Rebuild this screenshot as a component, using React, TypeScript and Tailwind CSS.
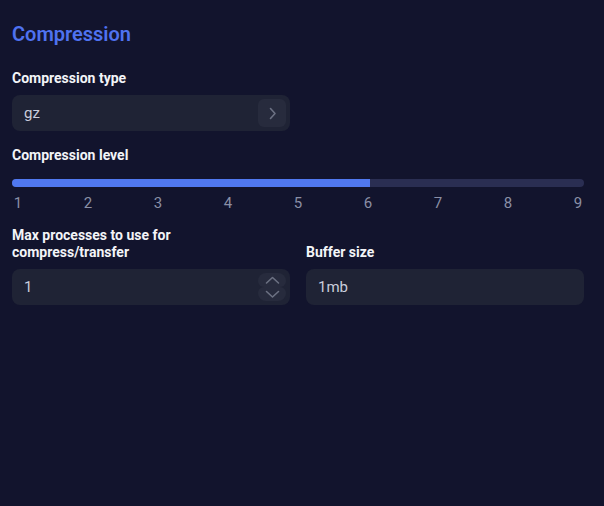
import { useState } from "react";

const levels = [1, 2, 3, 4, 5, 6, 7, 8, 9];

function Chevron({ dir }: { dir: "right" | "up" | "down" }) {
  const d =
    dir === "right" ? "M5.5 2.5l4.5 5-4.5 5" : dir === "up" ? "M1.5 10l6-5.5 6 5.5" : "M1.5 4.5l6 5.5 6-5.5";
  return (
    <svg width="15" height="15" viewBox="0 0 15 15" fill="none">
      <path d={d} stroke="#6c7183" strokeWidth="1.6" strokeLinecap="round" strokeLinejoin="round" />
    </svg>
  );
}

export default function App() {
  const [level] = useState(6);
  const pct = ((level - 1) / (levels.length - 1)) * 100;

  return (
    <main
      className="min-h-[506px] w-full bg-[#12142d] pl-3 pr-5 pt-5"
      style={{ fontFamily: "Roboto, 'Liberation Sans', sans-serif" }}
    >
      <h1 className="text-[20px] font-semibold leading-7 text-[#4f72f0]">Compression</h1>

      <div className="mt-[22px] flex flex-col gap-2">
        <label className="text-[14px] font-bold leading-[17px] text-[#f3f4f8]">Compression type</label>
        <div className="flex h-9 w-[278px] items-center justify-between rounded-lg bg-[#1f2335] pl-3 pr-1">
          <span className="text-[15px] text-[#c9cddc]">gz</span>
          <span className="flex h-7 w-7 items-center justify-center rounded-md bg-[#272b3d]">
            <Chevron dir="right" />
          </span>
        </div>
      </div>

      <div className="mt-4 flex flex-col">
        <label className="text-[14px] font-bold leading-[17px] text-[#f3f4f8]">Compression level</label>
        <div className="mt-[15px] h-2 w-full overflow-hidden rounded-full bg-[#2a2e52]">
          <div className="h-full bg-[#5078ef]" style={{ width: `${pct}%` }} />
        </div>
        <div className="mt-2 flex justify-between px-[6px]">
          {levels.map((n) => (
            <span key={n} className="w-0 text-center text-[15px] leading-4 text-[#8a8fa6]">
              <span className="-ml-2 inline-block w-4">{n}</span>
            </span>
          ))}
        </div>
      </div>

      <div className="mt-4 grid grid-cols-2 items-end gap-4">
        <div className="flex flex-col gap-2">
          <label className="text-[14px] font-bold leading-[17px] text-[#f3f4f8]">
            Max processes to use for
            <br />
            compress/transfer
          </label>
          <div className="flex h-9 items-center justify-between rounded-lg bg-[#1f2335] pl-3 pr-1">
            <span className="text-[15px] text-[#c9cddc]">1</span>
            <span className="flex w-7 flex-col">
              <span className="flex h-[14px] items-center justify-center rounded-t-lg rounded-b-md bg-[#272b3d]">
                <Chevron dir="up" />
              </span>
              <span className="flex h-[14px] items-center justify-center rounded-b-lg rounded-t-md bg-[#272b3d]">
                <Chevron dir="down" />
              </span>
            </span>
          </div>
        </div>
        <div className="flex flex-col gap-2">
          <label className="text-[14px] font-bold leading-[17px] text-[#f3f4f8]">Buffer size</label>
          <div className="flex h-9 items-center rounded-lg bg-[#1f2335] px-3">
            <span className="text-[15px] text-[#c9cddc]">1mb</span>
          </div>
        </div>
      </div>
    </main>
  );
}
